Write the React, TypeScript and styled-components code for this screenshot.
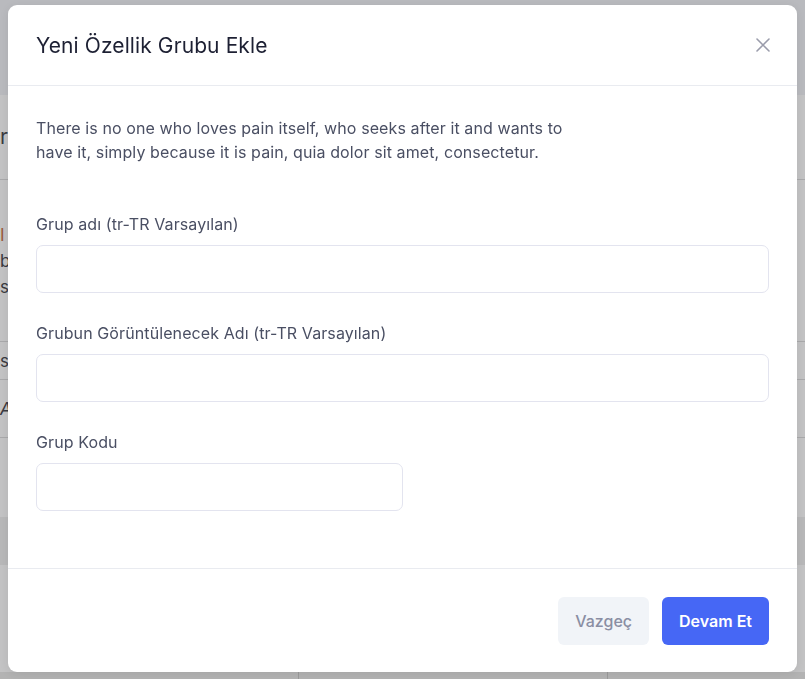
import React from "react";
import styled, { createGlobalStyle } from "styled-components";

const Global = createGlobalStyle`
  html, body { margin: 0; padding: 0; }
  body {
    width: 805px;
    height: 679px;
    overflow: hidden;
    font-family: Inter, "Noto Sans", "Liberation Sans", sans-serif;
    background: #c3c3c4;
  }
  * { box-sizing: border-box; }
`;

/* ---------- page behind the overlay ---------- */
const Page = styled.div`
  width: 805px;
  height: 679px;
  display: flex;
  flex-direction: column;
  background: #c3c3c4;
  color: #2b2b30;
  overflow: hidden;
`;

const PageHeader = styled.div`
  height: 95px;
  flex: none;
  background: #b9babe;
`;

const PageRow = styled.div<{ $h: number; $bg?: string; $line?: boolean }>`
  height: ${(p) => p.$h}px;
  flex: none;
  display: flex;
  flex-direction: column;
  justify-content: center;
  background: ${(p) => p.$bg || "transparent"};
  border-bottom: ${(p) => (p.$line ? "1px solid #a9a9ab" : "none")};
  font-size: 17px;
  line-height: 26px;
`;

const PageText = styled.span<{ $c?: string; $italic?: boolean; $big?: boolean }>`
  color: ${(p) => p.$c || "#3a3a40"};
  font-style: ${(p) => (p.$italic ? "italic" : "normal")};
  font-size: ${(p) => (p.$big ? "21px" : "17px")};
  white-space: nowrap;
`;

const PageFooter = styled.div`
  flex: 1;
  background: #b3b3b3;
  display: grid;
  grid-template-columns: 298px 309px 1fr;
`;

const FooterCell = styled.div`
  border-left: 1px solid #9b9b9b;
  &:first-child { border-left: none; }
`;

/* ---------- modal ---------- */
const Modal = styled.div`
  position: fixed;
  left: 8px;
  top: 5px;
  width: 789px;
  height: 667px;
  background: #ffffff;
  border-radius: 9px;
  display: flex;
  flex-direction: column;
  box-shadow: 0 2px 10px rgba(0, 0, 0, 0.08);
`;

const Header = styled.div`
  height: 81px;
  flex: none;
  display: flex;
  align-items: center;
  justify-content: space-between;
  padding: 0 24px 0 28px;
  border-bottom: 1px solid #e9ebf0;
`;

const Title = styled.h2`
  margin: 0;
  font-size: 21px;
  font-weight: 400;
  color: #1d2033;
  letter-spacing: 0.1px;
`;

const CloseButton = styled.button`
  border: none;
  background: transparent;
  padding: 0;
  width: 20px;
  height: 20px;
  display: flex;
  align-items: center;
  justify-content: center;
  cursor: pointer;
  color: #9a9cab;
`;

const Body = styled.div`
  flex: 1;
  padding: 30px 28px 0 28px;
  display: flex;
  flex-direction: column;
`;

const Intro = styled.p`
  margin: 0 0 48px 0;
  max-width: 560px;
  font-size: 16px;
  letter-spacing: 0.1px;
  line-height: 24px;
  color: #4a4f63;
`;

const Field = styled.div`
  display: flex;
  flex-direction: column;
  gap: 9px;
  margin-bottom: 28px;
`;

const Label = styled.label`
  font-size: 16px;
  letter-spacing: 0.1px;
  line-height: 24px;
  color: #4a4f63;
`;

const Input = styled.input<{ $narrow?: boolean }>`
  width: ${(p) => (p.$narrow ? "367px" : "100%")};
  height: 48px;
  border: 1px solid #e3e4ef;
  border-radius: 7px;
  padding: 0 14px;
  font-family: inherit;
  font-size: 15px;
  outline: none;
  background: #fff;
`;

const Footer = styled.div`
  height: 104px;
  flex: none;
  border-top: 1px solid #e9ebf0;
  display: flex;
  align-items: flex-start;
  justify-content: flex-end;
  gap: 13px;
  padding: 28px 28px 0 28px;
`;

const Button = styled.button<{ $primary?: boolean }>`
  height: 48px;
  padding: 0 17px;
  border: none;
  border-radius: 6px;
  font-family: inherit;
  font-size: 16px;
  font-weight: ${(p) => (p.$primary ? 600 : 500)};
  background: ${(p) => (p.$primary ? "#4667f5" : "#f1f4f8")};
  color: ${(p) => (p.$primary ? "#ffffff" : "#8a8ea3")};
  cursor: pointer;
`;

export default function App() {
  return (
    <>
      <Global />
      <Page>
        <PageHeader />
        <PageRow $h={85} $line>
          <PageText $big>r</PageText>
        </PageRow>
        <PageRow $h={162} $line>
          <PageText $c="#9a5a3a">I</PageText>
          <PageText>b</PageText>
          <PageText>s</PageText>
        </PageRow>
        <PageRow $h={38} $line>
          <PageText>s</PageText>
        </PageRow>
        <PageRow $h={58} $line>
          <PageText $italic>A</PageText>
        </PageRow>
        <PageRow $h={79} />
        <PageRow $h={48} $bg="#b8b8b9" />
        <PageRow $h={107} />
        <PageFooter>
          <FooterCell />
          <FooterCell />
          <FooterCell />
        </PageFooter>
      </Page>

      <Modal role="dialog" aria-modal="true">
        <Header>
          <Title>Yeni Özellik Grubu Ekle</Title>
          <CloseButton aria-label="Kapat">
            <svg width="14" height="14" viewBox="0 0 14 14" fill="none">
              <path d="M1 1L13 13M13 1L1 13" stroke="currentColor" strokeWidth="1.6" strokeLinecap="round" />
            </svg>
          </CloseButton>
        </Header>
        <Body>
          <Intro>
            There is no one who loves pain itself, who seeks after it and wants to have it, simply because it is pain,
            quia dolor sit amet, consectetur.
          </Intro>
          <Field>
            <Label>Grup adı (tr-TR Varsayılan)</Label>
            <Input />
          </Field>
          <Field>
            <Label>Grubun Görüntülenecek Adı (tr-TR Varsayılan)</Label>
            <Input />
          </Field>
          <Field>
            <Label>Grup Kodu</Label>
            <Input $narrow />
          </Field>
        </Body>
        <Footer>
          <Button>Vazgeç</Button>
          <Button $primary>Devam Et</Button>
        </Footer>
      </Modal>
    </>
  );
}
